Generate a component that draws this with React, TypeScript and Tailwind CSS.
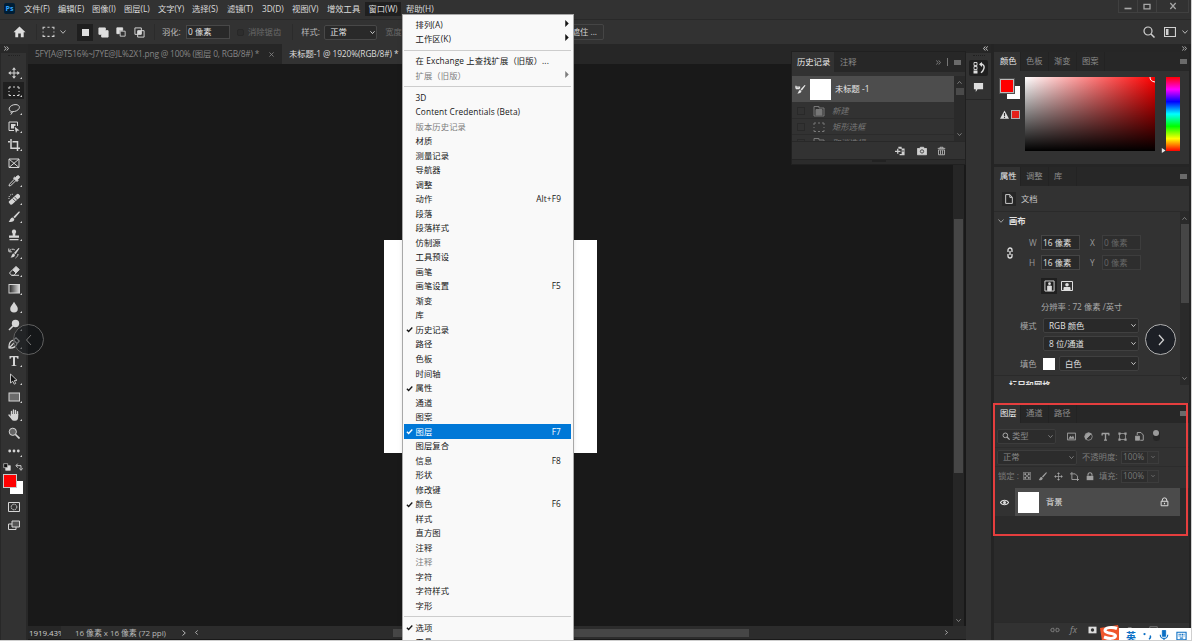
import React from 'react';
import clsx from 'clsx';

type MenuEntry = { label: string; key?: string; checked?: boolean; disabled?: boolean; sub?: boolean; active?: boolean } | 'sep';

const topMenu = [
  { label: '文件(F)', width: 'w-[34px]' },
  { label: '编辑(E)', width: 'w-[34px]' },
  { label: '图像(I)', width: 'w-[32px]' },
  { label: '图层(L)', width: 'w-[34px]' },
  { label: '文字(Y)', width: 'w-[34px]' },
  { label: '选择(S)', width: 'w-[35px]' },
  { label: '滤镜(T)', width: 'w-[35px]' },
  { label: '3D(D)', width: 'w-[30px]' },
  { label: '视图(V)', width: 'w-[35px]' },
  { label: '增效工具', width: 'w-[38px]' },
];

const windowMenu: MenuEntry[] = [
  { label: '排列(A)', sub: true },
  { label: '工作区(K)', sub: true },
  'sep',
  { label: '在 Exchange 上查找扩展（旧版）...' },
  { label: '扩展（旧版）', sub: true, disabled: true },
  'sep',
  { label: '3D' },
  { label: 'Content Credentials (Beta)' },
  { label: '版本历史记录', disabled: true },
  { label: '材质' },
  { label: '测量记录' },
  { label: '导航器' },
  { label: '调整' },
  { label: '动作', key: 'Alt+F9' },
  { label: '段落' },
  { label: '段落样式' },
  { label: '仿制源' },
  { label: '工具预设' },
  { label: '画笔' },
  { label: '画笔设置', key: 'F5' },
  { label: '渐变' },
  { label: '库' },
  { label: '历史记录', checked: true },
  { label: '路径' },
  { label: '色板' },
  { label: '时间轴' },
  { label: '属性', checked: true },
  { label: '通道' },
  { label: '图案' },
  { label: '图层', key: 'F7', checked: true, active: true },
  { label: '图层复合' },
  { label: '信息', key: 'F8' },
  { label: '形状' },
  { label: '修改键' },
  { label: '颜色', key: 'F6', checked: true },
  { label: '样式' },
  { label: '直方图' },
  { label: '注释' },
  { label: '注释', disabled: true },
  { label: '字符' },
  { label: '字符样式' },
  { label: '字形' },
  'sep',
  { label: '选项', checked: true },
  { label: '工具' },
];

function Svg({ children, className = 'w-3 h-3', box = '0 0 12 12' }: { children: React.ReactNode; className?: string; box?: string }) {
  return (
    <svg viewBox={box} className={clsx('shrink-0', className)} fill="none" stroke="currentColor" strokeWidth="1">
      {children}
    </svg>
  );
}

function Chevron({ className = 'w-[5px] h-[5px]' }: { className?: string }) {
  return (
    <Svg box="0 0 6 6" className={className}>
      <path d="M.5 1.500 3 4.300 5.500 1.500" />
    </Svg>
  );
}

function DoubleChevron({ left }: { left?: boolean }) {
  return (
    <Svg box="0 0 6 6" className={clsx('w-[5px] h-[5px]', left && 'rotate-180')}>
      <path d="M.5 .5 2.500 3 .5 5.500M3.300 .5 5.300 3 3.300 5.500" />
    </Svg>
  );
}

function PanelMenu() {
  return <span className="w-[7px] h-[5px] bg-[#6a6a6a]" />;
}

const marquee = <path d="M1 4V2h2M5 2h2M9 2h2v2M11 6v1M11 9v1.500H9M7 10.500H5M3 10.500H1V9M1 7V6" />;

const tools: { name: string; icon: React.ReactNode; plain?: boolean }[] = [
  {
    name: 'move',
    icon: (
      <>
        <path d="M6 2v8M2 6h8" />
        <path d="M6 .2 8 2.700H4ZM6 11.800 8 9.300H4ZM.2 6 2.700 4v4ZM11.800 6 9.300 4v4Z" fill="currentColor" stroke="none" />
      </>
    ),
  },
  { name: 'marquee', icon: marquee },
  {
    name: 'lasso',
    icon: <path d="M3.500 8.500C1.500 8 .8 6.500 1.300 5 2 3 5 1.300 8 1.600c3 .3 4 2 3 4C10 7.500 7 8.800 4.500 8.600c-1.500-.1-2 .8-1.300 1.300.8.400 1.800-.2 1.300-1.300M3.500 10c.3 1-.4 1.500-1 1.700" />,
  },
  {
    name: 'select',
    icon: (
      <>
        <path d="M6 9.500H1V1h8.500v4" />
        <path d="M3 3h4.500v2H6v2.500H3Z" fill="currentColor" stroke="none" />
        <path d="m6.500 5.500 5 4-2.300.3L8 12Z" fill="currentColor" stroke="none" />
      </>
    ),
  },
  { name: 'crop', icon: <path d="M0 2.800h2M3 0v9.300h9M4.500 2.800h5V12" strokeWidth="1.500" /> },
  { name: 'frame', plain: true, icon: <path d="M1 2h10v8.500H1ZM1 2l10 8.500M11 2 1 10.500" /> },
  {
    name: 'eyedropper',
    icon: (
      <>
        <path d="M6.500 4 1.500 9.200 1 11l1.800-.5L8 5.500" />
        <path d="m5.500 3 1-.8 1 .7C8 1.500 9.500.3 11 1c1 1.200 0 2.700-1.500 3.500l.5 1-1 1Z" fill="currentColor" />
      </>
    ),
  },
  {
    name: 'healing',
    icon: (
      <>
        <path d="M1 6C.5 3 2.500 1 5 1.300" strokeDasharray="1 1" />
        <rect x="0" y="4" width="13" height="4.500" rx="1.500" transform="rotate(-42 6.500 6.200)" fill="currentColor" stroke="none" />
        <path d="m4.500 5.500 3.500 3.200M6.500 3.800 9.500 7" stroke="#323232" strokeWidth=".8" />
      </>
    ),
  },
  {
    name: 'brush',
    icon: <path d="M11.500.5c.5.400.3.900 0 1.300L6.800 7.300 5.300 6 10.500.8c.3-.3.700-.5 1-.3ZM4.800 6.500l1.500 1.400C6.500 10 4 11.500.5 10.800 2.300 10 2 6.500 4.800 6.500Z" fill="currentColor" stroke="none" />,
  },
  {
    name: 'stamp',
    icon: <path d="M6 .5a2.200 2.200 0 0 1 1.500 3.800L7.200 6.500H11v2.300H1V6.500h3.800L4.500 4.300A2.200 2.200 0 0 1 6 .5ZM1.500 10h9v1.200h-9Z" fill="currentColor" stroke="none" />,
  },
  {
    name: 'historyBrush',
    icon: (
      <>
        <path d="M11.500 1.500 7.500 7.200 6 6 10.500 1ZM5.600 6.500 7 7.700c0 2-2 3-4.500 2.700 1.500-.7 1-3.500 3.100-3.900Z" fill="currentColor" stroke="none" />
        <path d="M1 4.500C2.500 2 5 1.500 7 3M.8 1.500v3.300h3M10 7c0 2-1 3-2.500 4" strokeDasharray="3 .6" />
      </>
    ),
  },
  {
    name: 'eraser',
    icon: (
      <>
        <path d="M4.700 4.700 8 1.500l3.300 3L8 8Z" fill="currentColor" />
        <path d="M4.700 4.700 1.500 8 3.500 10.300H6L8 8M3.500 10.300H11" />
      </>
    ),
  },
  {
    name: 'gradient',
    icon: (
      <>
        <defs>
          <linearGradient id="tool-gradient">
            <stop offset="0" stopColor="#222" />
            <stop offset="1" stopColor="#ddd" />
          </linearGradient>
        </defs>
        <rect x="1" y="1.500" width="10.500" height="8.500" fill="url(#tool-gradient)" />
      </>
    ),
  },
  { name: 'blur', icon: <path d="M6 .8C7.500 3.500 9.800 5.500 9.800 7.800a3.800 3.800 0 0 1-7.600 0C2.200 5.500 4.500 3.500 6 .8Z" fill="currentColor" stroke="none" /> },
  {
    name: 'dodge',
    icon: (
      <>
        <circle cx="7.500" cy="4.500" r="3.700" fill="currentColor" stroke="none" />
        <path d="M5 7 1 11" strokeWidth="1.600" />
      </>
    ),
  },
  { name: 'pen', icon: <path d="M1 11c-.3-4 1-7 4.500-8l3.500 3.500C8 10 5 11.300 1 11ZL5 7M6 2.500 8 .8 11.200 4 9.500 6M5 6.800l.8-.8" strokeWidth="1.200" /> },
  { name: 'type', icon: <path d="M1.500 1h9v2.800H9.300C9.200 2.600 8.800 2.300 7 2.300v7.200c0 .7.500.9 1.500 1V11h-5v-.5c1-.1 1.500-.3 1.500-1V2.300c-1.800 0-2.200.3-2.300 1.500H1.500Z" fill="currentColor" stroke="none" /> },
  { name: 'path', icon: <path d="M2.500 1v9l2.300-1.800 1.400 3 1.500-.7-1.400-3 2.700-.2Z" fill="#111" strokeWidth=".9" /> },
  { name: 'rect', icon: <rect x="1" y="2" width="10.500" height="8" fill="#6b6b6b" /> },
  {
    name: 'hand',
    icon: (
      <>
        <path d="M3.500 6V2.500M5.500 5V1M7.500 5V1.500M9.500 6V2.800M1 6l2.500 3" strokeWidth="1.400" strokeLinecap="round" />
        <path d="M2.800 5h7.400v3c0 2-1 3.800-3 3.800H6C4 11.800 2.800 9.500 2.800 8Z" fill="currentColor" stroke="none" />
      </>
    ),
  },
  {
    name: 'zoom',
    plain: true,
    icon: (
      <>
        <circle cx="4.800" cy="4.800" r="3.600" fill="#666" />
        <path d="m7.500 7.500 4 4" strokeWidth="1.700" />
      </>
    ),
  },
  {
    name: 'more',
    icon: (
      <g fill="currentColor" stroke="none">
        <circle cx="1.700" cy="6" r="1.400" />
        <circle cx="6" cy="6" r="1.400" />
        <circle cx="10.300" cy="6" r="1.400" />
      </g>
    ),
  },
];

function MenuBar() {
  return (
    <header className="flex h-[20px] shrink-0 items-start border-b border-[#292929] bg-[#323232] text-[#dcdcdc]">
      <div className="ml-1 mt-[3px] mr-[9px] flex h-[11px] w-[11px] items-center justify-center rounded-xs bg-[#001e36] text-[7px] font-bold text-[#31a8ff]">Ps</div>
      <nav className="flex h-[18px] items-center whitespace-nowrap">
        {topMenu.map((item) => (
          <span key={item.label} className={clsx('shrink-0', item.width)}>{item.label}</span>
        ))}
        <span className="flex h-[14px] w-[36px] items-center justify-center bg-[#1f1f1f]">窗口(W)</span>
        <span className="ml-[5px]">帮助(H)</span>
      </nav>
      <div className="ml-auto mr-[2px] flex h-[13px] border border-t-0 border-[#404040] text-[#a8a8a8]">
        <span className="flex w-[19px] items-center justify-center border-r border-[#404040]">
          <Svg className="w-2 h-2" box="0 0 8 8"><path d="M.5 6.500h7" strokeWidth="1.600" /></Svg>
        </span>
        <span className="flex w-[19px] items-center justify-center border-r border-[#404040]">
          <Svg className="w-2 h-2" box="0 0 8 8"><path d="M1 2.300h6v4.500H1Z" strokeWidth="1.300" /></Svg>
        </span>
        <span className="flex w-[31px] items-center justify-center">
          <Svg className="w-2 h-2" box="0 0 8 8"><path d="m1.300 1 5.400 6M6.700 1 1.300 7" strokeWidth="1.200" /></Svg>
        </span>
      </div>
    </header>
  );
}

function OptionsBar() {
  return (
    <div className="flex h-[24px] shrink-0 items-center whitespace-nowrap bg-[#323232] pl-[13px] text-[#b8b8b8]">
      <Svg className="w-[13px] h-[12px] text-[#dedede]">
        <path d="M6 .5 12 6.300h-1.800v5H7.300V7.500H4.700v3.800H1.800v-5H0Z" fill="currentColor" stroke="none" />
      </Svg>
      <span className="ml-[10px] h-4 w-px bg-[#2b2b2b]" />
      <Svg className="ml-[5px] mb-[1px] w-[13px] h-[13px] text-[#d0d0d0]">{marquee}</Svg>
      <Chevron className="ml-[5px] w-[6px] h-[6px]" />
      <div className="ml-[11px] flex items-center text-[#dedede]">
        <span className="flex h-[17px] w-[16px] items-center justify-center bg-[#1f1f1f]">
          <span className="h-[7px] w-[7px] bg-[#dedede]" />
        </span>
        <span className="flex w-[20px] justify-center">
          <Svg className="w-[11px] h-[11px]"><path d="M1 1h7v3h3v7H4V8H1Z" fill="currentColor" /></Svg>
        </span>
        <span className="flex w-[16px] justify-center">
          <Svg className="w-[10px] h-[10px]">
            <path d="M1 1h7v3H4v4H1Z" fill="currentColor" />
            <path d="M5 5h6v6H5Z" />
          </Svg>
        </span>
        <span className="flex w-[20px] justify-center">
          <Svg className="w-[11px] h-[11px]">
            <path d="M1 1h7v7H1ZM4 4h7v7H4Z" />
            <path d="M4.500 4.500h3v3h-3Z" fill="currentColor" />
          </Svg>
        </span>
      </div>
      <span className="ml-[5px] h-4 w-px bg-[#2b2b2b]" />
      <span className="ml-[7px] w-[24px]">羽化:</span>
      <span className="flex h-[14px] w-[44px] items-center border border-[#484848] bg-[#292929] pl-px text-[#e0e0e0]">0 像素</span>
      <span className="ml-[7px] h-[7px] w-[7px] rounded-xs border border-[#282828] bg-[#2d2d2d]" />
      <span className="ml-[4px] text-[#696969]">消除锯齿</span>
      <span className="ml-[11px] h-4 w-px bg-[#2b2b2b]" />
      <span className="ml-[8px] w-[23px]">样式:</span>
      <span className="flex h-[15px] w-[53px] items-center justify-between rounded-xs border border-[#484848] bg-[#292929] pl-[5px] pr-[1px] text-[#e8e8e8]">
        正常
        <Chevron />
      </span>
      <span className="ml-[8px] text-[#696969]">宽度:</span>
      <span className="ml-auto mr-[539px] flex h-[16px] w-[66px] items-center justify-end rounded-xs border border-[#454545] pr-[6px] text-[#d0d0d0]">选择并遮住 ...</span>
      <Svg className="w-[12px] h-[12px] text-[#d0d0d0]">
        <circle cx="5" cy="5" r="4" strokeWidth="1.200" />
        <path d="m8 8 3.500 3.500" strokeWidth="1.500" />
      </Svg>
      <Svg className="ml-[9px] w-[12px] h-[12px] text-[#d0d0d0]">
        <path d="M.5 1.500h11v9H.5Z" strokeWidth="1.200" />
        <path d="M2 3h2.500v6H2Z" fill="currentColor" stroke="none" />
      </Svg>
      <Chevron className="ml-[6px] mr-[3px] w-[6px] h-[6px]" />
    </div>
  );
}

function Toolbar() {
  return (
    <aside className="flex w-[26px] shrink-0 flex-col border-l border-[#282828] bg-[#323232] text-[#d5d5d5]">
      <div className="flex h-[9px] items-center bg-[#282828] pl-[3px]"><DoubleChevron /></div>
      <div className="flex h-[11px] items-start justify-center pt-[2px]"><span className="w-3 border-t border-dotted border-[#222]" /></div>
      {tools.map((tool) => (
        <div
          key={tool.name}
          className={clsx('mx-[2px] mb-px flex h-[17px] items-center justify-center', tool.name === 'marquee' && 'bg-[#1f1f1f]')}
        >
          <Svg className="w-[12px] h-[12px] ml-[2px]">{tool.icon}</Svg>
          <Svg box="0 0 3 3" className={clsx('w-[2px] h-[2px] self-end mb-[2px]', tool.plain && 'opacity-0')}>
            <path d="M3 0v3H0Z" fill="currentColor" stroke="none" />
          </Svg>
        </div>
      ))}
      <div className="mt-[2px] flex h-[10px] items-center pl-[2px]">
        <Svg className="w-[8px] h-[8px]">
          <path d="M4 4h7v7H4Z" fill="#ddd" />
          <path d="M1 1h6v6H1Z" fill="#111" />
        </Svg>
        <Svg className="ml-[4px] w-[8px] h-[8px]">
          <path d="M2 4h7v5M4 1 1.500 4 4 7M6.500 8 9 11l2.500-3" strokeWidth="1.400" />
        </Svg>
      </div>
      <div className="ml-[2px] mt-[2px] grid h-[20px] w-[20px]">
        <span className="col-start-1 row-start-1 h-[13px] w-[13px] place-self-end bg-white" />
        <span className="col-start-1 row-start-1 h-[14px] w-[14px] border border-[#c8c8c8] bg-[#ff0000]" />
      </div>
      <div className="mt-[7px] flex flex-col items-center gap-[6px]">
        <Svg className="w-[12px] h-[12px]">
          <path d="M.5 1.500h11v9H.5Z" />
          <circle cx="6" cy="6" r="2.800" strokeDasharray="1.500 .5" />
        </Svg>
        <Svg className="w-[12px] h-[12px]">
          <path d="M4 2h7.500v6H4Z" fill="#555" />
          <path d="M4 5H.5v5.500H8V8" />
        </Svg>
      </div>
    </aside>
  );
}

function Workspace() {
  return (
    <main className="flex w-[939px] shrink-0 flex-col border-l border-[#282828] bg-[#191919]">
      <div className="flex h-[20px] shrink-0 items-center whitespace-nowrap bg-[#262626] text-[8.400px]">
        <div className="flex h-full w-[254px] items-center pl-[7px] text-[#858585]">
          <span className="w-[234px] tracking-[-0.190px]">5FY[A@T516%~J7YE@JL%2X1.png @ 100% (图层 0, RGB/8#) *</span>
          <Svg className="w-[5px] h-[5px]" box="0 0 6 6"><path d="m.5.5 5 5M5.500.5l-5 5" /></Svg>
        </div>
        <div className="flex h-full w-[125px] items-center bg-[#323232] pl-[7px] tracking-[-0.120px] text-[#dcdcdc]">未标题-1 @ 1920%(RGB/8#) *</div>
      </div>
      <div className="flex h-[562px]">
        <div className="flex flex-1 items-start">
          <div className="ml-[356px] mt-[176px] h-[213px] w-[213px] bg-white" />
        </div>
        <div className="mr-[2px] flex w-[11px] flex-col items-center justify-between bg-[#262626] pb-[3px] text-[#909090]">
          <span className="mt-[155px] h-[254px] w-[9px] bg-[#464646]" />
          <Chevron />
        </div>
      </div>
      <div className="flex h-[13px] items-center bg-[#262626] text-[8px] text-[#d0d0d0]">
        <span className="w-[33px] overflow-hidden pl-[1px] tracking-[-0.080px]">1919.43%</span>
        <span className="flex h-full flex-1 items-center whitespace-nowrap bg-[#2c2c2c] pl-[14px] text-[#b8b8b8]">
          <span className="w-[106px] tracking-[-0.080px]">16 像素 x 16 像素 (72 ppi)</span>
          <Chevron className="w-[6px] h-[6px] -rotate-90" />
          <Chevron className="ml-[7px] w-[5px] h-[5px] rotate-90" />
          <span className="ml-[194px] h-[8px] w-[356px] bg-[#464646]" />
          <Chevron className="ml-auto mr-[17px] w-[5px] h-[5px] -rotate-90" />
        </span>
      </div>
    </main>
  );
}

function HistoryPanel() {
  return (
    <section className="absolute left-[791px] top-[51px] flex h-[114px] w-[175px] flex-col border border-[#202020] bg-[#323232]">
      <div className="flex h-[20px] items-center bg-[#272727] text-[#8a8a8a]">
        <span className="flex h-full w-[42px] items-center bg-[#323232] pl-[5px] text-[#ededed]">历史记录</span>
        <span className="ml-[6px] flex-1">注释</span>
        <DoubleChevron />
        <span className="mx-[6px] h-2 w-px bg-[#777]" />
        <PanelMenu />
        <span className="w-[4px]" />
      </div>
      <div className="mt-[4px] flex h-[65px] overflow-hidden">
        <div className="w-[162px] text-[#777]">
          <div className="mb-px flex h-[26px] items-center bg-[#4d4d4d] text-[8.300px] text-[#e8e8e8]">
            <Svg className="ml-[3px] w-[11px] h-[11px]">
              <path d="M11.500 1.500 7.500 7.200 6 6 10.500 1ZM5.600 6.500 7 7.700c0 2-2 3-4.500 2.700 1.500-.7 1-3.500 3.100-3.900Z" fill="currentColor" stroke="none" />
              <path d="M1 5h4M1 2v3M1 3.500h4V5" strokeWidth="1.300" />
            </Svg>
            <span className="ml-[4px] mr-[4px] h-[21px] w-[21px] bg-white" />
            未标题 -1
          </div>
          {['新建', '矩形选框', '取消选择'].map((step, i) => (
            <div key={step} className="flex h-[16px] items-center border-b border-[#2b2b2b] italic">
              <span className="ml-[5px] h-[8px] w-[8px] border border-[#292929]" />
              <Svg className="ml-[8px] mr-[7px] w-[12px] h-[12px]">
                {i === 1 ? marquee : (
                  <>
                    <path d="M1 1.500h5V3h5v8H1Z" />
                    <path d="M3 4.500h6V10H3Z" fill="currentColor" />
                  </>
                )}
              </Svg>
              {step}
            </div>
          ))}
        </div>
        <div className="flex flex-1 flex-col items-center bg-[#2a2a2a] py-[4px] text-[#888]">
          <Chevron className="w-[5px] h-[5px] rotate-180" />
          <span className="mt-[3px] h-[7px] w-[8px] bg-[#4a4a4a]" />
          <Chevron className="mt-auto w-[5px] h-[5px]" />
        </div>
      </div>
      <div className="flex h-[18px] items-center border-t border-[#282828] text-[#cfcfcf]">
        <Svg className="ml-[103px] w-[10px] h-[10px]">
          <path d="M4 3V1h4v2h3.500v8H5.500V9.500H8v-6Z" fill="currentColor" stroke="none" />
          <path d="M0 6.300h6.500M3.300 3.300v6" strokeWidth="1.500" />
          <path d="M8 6h3" stroke="#323232" />
        </Svg>
        <Svg className="ml-[12px] w-[10px] h-[10px]">
          <path d="M.5 3h2.800L4 1.500h4L8.700 3h2.800v7.500H.5Z" fill="currentColor" />
          <circle cx="6" cy="6.500" r="2" fill="#ccc" stroke="#323232" />
        </Svg>
        <Svg className="ml-[10px] w-[9px] h-[10px]">
          <path d="M1 2.500h10M4 2.500V1h4v1.500M2 4.500h8V11H2ZM4.700 5v5.500M7.300 5v5.500" />
        </Svg>
      </div>
      <div className="flex flex-1 justify-center border-t border-[#242424] bg-[#2b2b2b]"><span className="h-[2px] w-[14px] bg-[#222]" /></div>
    </section>
  );
}

function IconDock() {
  return (
    <aside className="flex w-[27px] shrink-0 flex-col items-center border-r-2 border-[#242424] bg-[#323232] text-[#dedede]">
      <div className="flex h-[9px] w-full items-center justify-end bg-[#262626] pr-[3px]"><DoubleChevron left /></div>
      <span className="mt-[2px] w-3 border-t border-dotted border-[#202020]" />
      <span className="mt-[4px] flex h-[16px] w-[19px] items-center justify-center rounded-xs bg-[#1f1f1f]">
        <Svg className="w-[12px] h-[12px]">
          <path d="M1 .5h3v3H1ZM1 4.500h3v3H1Z" strokeWidth=".9" />
          <path d="M.5 8.500h4v3h-4Z" fill="currentColor" stroke="none" />
          <path d="M7.500 1.800C11 2 11.800 5 10.500 7.500 10 9 9 10 8 10.800" strokeWidth="1.400" />
          <path d="M9 0v5L6 2.300Z" fill="currentColor" stroke="none" />
        </Svg>
      </span>
      <Svg className="mt-[5px] w-[11px] h-[12px]">
        <path d="M1 1.500h10v7H5l-2 3v-3H1Z" fill="currentColor" stroke="none" />
      </Svg>
      <span className="mt-[6px] h-px w-full bg-[#262626]" />
    </aside>
  );
}

function PanelTabs({ names }: { names: string[] }) {
  return (
    <div className="flex h-[19px] shrink-0 items-center bg-[#272727] text-[#8c8c8c]">
      {names.map((name, i) => (
        <span
          key={name}
          className={clsx('flex h-full items-center border-r border-[#232323] pb-[1px]', i === 0 ? 'w-[27px] bg-[#323232] pl-[6px] text-[#ededed]' : 'w-[28px] pl-[5px]', name === '库' && 'w-[25px]')}
        >
          {name}
        </span>
      ))}
      <span className="ml-auto mr-[2px] flex"><PanelMenu /></span>
    </div>
  );
}

function ColorPanel() {
  return (
    <section className="flex h-[112px] flex-col">
      <PanelTabs names={['颜色', '色板', '渐变', '图案']} />
      <div className="flex flex-1 items-start pl-[6px] pt-[6px]">
        <div className="w-[25px] pt-[2px]">
          <div className="grid h-[20px] w-[20px]">
            <span className="col-start-1 row-start-1 h-[13px] w-[13px] place-self-end bg-white" />
            <span className="col-start-1 row-start-1 h-[14px] w-[14px] border border-[#bbb] bg-[#ff0000] outline outline-[#505050]" />
          </div>
          <div className="mt-[11px] flex items-center gap-[2px]">
            <Svg className="w-[9px] h-[9px]">
              <path d="M6 .5 12 11.500H0Z" fill="#dedede" stroke="none" />
              <path d="M6 4v4M6 9v1.500" stroke="#323232" strokeWidth="1.500" />
            </Svg>
            <span className="h-[9px] w-[9px] border border-[#b0b0b0] bg-[#e52119]" />
          </div>
        </div>
        <div className="flex h-[74px] w-[130px] items-start justify-end overflow-hidden bg-[linear-gradient(to_bottom,transparent,black),linear-gradient(to_right,white,#ff0000)]">
          <Svg box="0 0 6 6" className="w-[6px] h-[6px] text-white"><path d="M1 0c0 3 1.500 4.500 5 5" /></Svg>
        </div>
        <Svg box="0 0 6 6" className="ml-[6px] mt-[71px] w-[5px] h-[5px]"><path d="M1 0 5.500 3 1 6Z" fill="#e8e8e8" stroke="none" /></Svg>
        <div className="h-[74px] w-[14px] bg-[linear-gradient(to_bottom,#f00,#f0f,#00f,#0ff,#0f0,#ff0,#f00)]" />
      </div>
    </section>
  );
}

function Field({ label, value, off }: { label: string; value: string; off?: boolean }) {
  return (
    <>
      <span className="w-[12px] text-[#9a9a9a]">{label}</span>
      <span className={clsx('flex h-[15px] w-[39px] items-center border pl-[1px]', off ? 'border-[#3d3d3d] bg-[#2e2e2e] text-[#666]' : 'border-[#454545] bg-[#292929] text-[#e0e0e0]')}>{value}</span>
    </>
  );
}

function Select({ value, className }: { value: string; className: string }) {
  return (
    <span className={clsx('flex h-[15px] items-center justify-between rounded-xs border border-[#404040] bg-[#292929] pl-[5px] pr-[2px]', className)}>
      {value}
      <Chevron />
    </span>
  );
}

function PropertiesPanel() {
  return (
    <section className="flex h-[228px] flex-col">
      <PanelTabs names={['属性', '调整', '库']} />
      <div className="flex h-[26px] items-center border-b border-[#2a2a2a] pl-[8px] pt-[1px] text-[#c8c8c8]">
        <span className="flex h-[14px] w-[14px] items-center justify-center bg-[#262626]">
          <Svg className="w-[10px] h-[10px]"><path d="M2 .7h5L10 4v7.300H2ZM7 .7V4h3" strokeWidth="1.200" /></Svg>
        </span>
        <span className="ml-[5px]">文档</span>
      </div>
      <div className="flex h-[173px] overflow-hidden whitespace-nowrap">
        <div className="w-[186px] text-[#e0e0e0]">
          <div className="flex h-[18px] items-center pl-[4px] font-bold">
            <span className="mr-[5px] text-[#a0a0a0]"><Chevron className="w-[6px] h-[6px]" /></span>
            画布
          </div>
          <div className="mt-[1px] flex">
            <div className="flex h-[44px] w-[35px] items-center pl-[12px]">
              <Svg className="w-[8px] h-[12px]" box="0 0 8 12">
                <path d="M2 5V3a2 2 0 0 1 4 0v2M2 7v2a2 2 0 0 0 4 0V7M4 4v4" strokeWidth="1.300" />
              </Svg>
            </div>
            <div className="pt-[4px]">
              <div className="mb-[5px] flex items-center"><Field label="W" value="16 像素" /><span className="w-[10px]" /><Field label="X" value="0 像素" off /></div>
              <div className="flex items-center"><Field label="H" value="16 像素" /><span className="w-[10px]" /><Field label="Y" value="0 像素" off /></div>
            </div>
          </div>
          <div className="mt-[3px] flex items-center pl-[47px] text-[#dedede]">
            <span className="flex h-[16px] w-[16px] items-center justify-center bg-[#1f1f1f]">
              <Svg className="w-[11px] h-[12px]"><path d="M1 .5h10v11H1Z" /><path d="M4 6h4v5H4Z" fill="currentColor" /><circle cx="6" cy="3.500" r="1.500" fill="currentColor" stroke="none" /></Svg>
            </span>
            <Svg className="ml-[4px] w-[12px] h-[10px]" box="0 0 12 10"><path d="M.5 .5h11v9H.5Z" /><path d="M3 9V6.500h6V9Z" fill="currentColor" /><circle cx="6" cy="3.800" r="1.800" fill="currentColor" stroke="none" /></Svg>
          </div>
          <div className="mt-[7px] pl-[47px] text-[#a8a8a8]">分辨率 : 72 像素 /英寸</div>
          <div className="mt-[5px] flex items-center">
            <span className="w-[49px] pl-[26px] text-[#a8a8a8]">模式</span>
            <Select value="RGB 颜色" className="w-[96px]" />
          </div>
          <div className="mt-[3px] flex pl-[49px]"><Select value="8 位/通道" className="w-[96px]" /></div>
          <div className="mt-[5px] flex items-center">
            <span className="w-[49px] pl-[26px] text-[#a8a8a8]">填色</span>
            <span className="mr-[4px] h-[12px] w-[12px] bg-white" />
            <Select value="白色" className="w-[80px]" />
          </div>
          <div className="mt-[4px] border-t border-[#2a2a2a] pl-[15px] pt-[3px] font-bold">标尺和网格</div>
        </div>
        <div className="flex flex-1 flex-col items-center bg-[#2a2a2a] py-[4px] text-[#888]">
          <Chevron className="w-[5px] h-[5px] rotate-180" />
          <span className="mt-[3px] h-[79px] w-[8px] bg-[#464646]" />
          <Chevron className="mt-auto w-[5px] h-[5px]" />
        </div>
      </div>
    </section>
  );
}

function Percent() {
  return (
    <>
      <span className="flex h-[13px] w-[27px] items-center border border-[#3c3c3c] bg-[#2d2d2d] pl-[1px] text-[#777]">100%</span>
      <span className="flex h-[13px] w-[11px] items-center justify-center border border-l-0 border-[#3c3c3c]"><Chevron className="w-[4px] h-[4px]" /></span>
    </>
  );
}

function LayersPanel() {
  return (
    <section className="flex flex-1 flex-col whitespace-nowrap text-[#7c7c7c]">
      <PanelTabs names={['图层', '通道', '路径']} />
      <div className="flex h-[25px] items-center border-b border-[#2c2c2c] pl-[3px] pt-[2px]">
        <span className="flex h-[15px] w-[59px] items-center rounded-xs border border-[#3c3c3c] bg-[#2c2c2c] pl-[4px] pr-[2px] text-[#8a8a8a]">
          <Svg className="mr-[2px] w-[8px] h-[8px] text-[#aaa]"><circle cx="5" cy="5" r="3.500" strokeWidth="1.500" /><path d="m7.500 7.500 4 4" strokeWidth="1.800" /></Svg>
          <span className="flex-1">类型</span>
          <Chevron />
        </span>
        <div className="ml-[11px] flex items-center gap-[8px] text-[#a0a0a0]">
          <Svg className="w-[9px] h-[9px]"><path d="M.5 1.500h11v9H.5Z" strokeWidth="1.300" /><path d="m2 9 2.500-4 2 2L8 4.500 10 9Z" fill="currentColor" stroke="none" /></Svg>
          <Svg className="w-[9px] h-[9px]"><circle cx="6" cy="6" r="5" /><path d="M9.500 2.500A5 5 0 0 0 2.500 9.500Z" fill="currentColor" /></Svg>
          <Svg className="w-[9px] h-[9px]"><path d="M1 2h10M1.500 2v2.500M10.500 2v2.500M6 2v9M4 10.800h4" strokeWidth="1.800" /></Svg>
          <Svg className="w-[9px] h-[9px]"><path d="M2 2h8v8H2Z" /><path d="M.5.5h3v3h-3ZM8.500.5h3v3h-3ZM.5 8.500h3v3h-3ZM8.500 8.500h3v3h-3Z" fill="currentColor" stroke="none" /></Svg>
          <Svg className="w-[9px] h-[9px]"><path d="M3 4V.7h5L11 4v7H7" strokeWidth="1.300" /><path d="M.5 5.500H6V11H.5Z" fill="currentColor" /></Svg>
          <span className="mb-[1px] ml-[1px] h-[11px] w-[7px] rounded-full bg-[#262626]"><span className="block h-[6px] w-[6px] rounded-full bg-[#9a9a9a]" /></span>
        </div>
      </div>
      <div className="flex h-[19px] items-center border-b border-[#2c2c2c] pl-[3px]">
        <span className="flex h-[15px] w-[80px] items-center justify-between rounded-xs border border-[#3c3c3c] bg-[#2c2c2c] pl-[5px] pr-[2px] text-[#8a8a8a]">正常<Chevron /></span>
        <span className="ml-[5px] w-[39px]">不透明度:</span>
        <Percent />
      </div>
      <div className="flex h-[21px] items-center pb-[3px] pl-[4px]">
        <span className="w-[25px]">锁定 :</span>
        <div className="flex w-[76px] items-center gap-[7px] text-[#a0a0a0]">
          <Svg className="w-[8px] h-[8px]"><path d="M.5.5h11v11H.5Z" /><path d="M2 2h2.700v2.700H2ZM7.300 2H10v2.700H7.300ZM4.700 4.700h2.600v2.600H4.700ZM2 7.300h2.700V10H2ZM7.300 7.300H10V10H7.300Z" fill="currentColor" stroke="none" /></Svg>
          <Svg className="w-[9px] h-[9px]">{tools[8].icon}</Svg>
          <Svg className="w-[9px] h-[9px]">{tools[0].icon}</Svg>
          <Svg className="w-[9px] h-[9px]"><path d="M0 2.500h7l3 3V12M2.500 0v10H12" strokeWidth="1.200" /></Svg>
          <Svg className="w-[8px] h-[9px]"><path d="M3 5V3.500a3 3 0 0 1 6 0V5" strokeWidth="1.600" /><path d="M1 5h10v6.500H1Z" fill="currentColor" stroke="none" /></Svg>
        </div>
        <span className="w-[22px]">填充:</span>
        <Percent />
      </div>
      <div className="flex flex-1 flex-col bg-[#2b2b2b]">
        <div className="flex h-[28px] items-center text-[#e0e0e0]">
          <span className="flex h-full w-[21px] items-center justify-center bg-[#323232]">
            <Svg className="w-[9px] h-[9px]"><path d="M.5 6C3 2 9 2 11.500 6 9 10 3 10 .5 6Z" strokeWidth="1.500" /><circle cx="6" cy="6" r="2" fill="currentColor" stroke="none" /></Svg>
          </span>
          <div className="flex h-full w-[165px] items-center bg-[#4b4b4b] pl-[3px]">
            <span className="mr-[7px] h-[21px] w-[21px] bg-white" />
            <span className="flex-1">背景</span>
            <Svg className="mr-[11px] w-[9px] h-[10px]"><path d="M3 5V3.500a3 3 0 0 1 6 0V5M1.500 5h9v6h-9Z" strokeWidth="1.300" /><path d="M6 7v2" strokeWidth="1.500" /></Svg>
          </div>
        </div>
      </div>
      <div className="mb-[1px] flex h-[17px] shrink-0 items-center border-t border-[#2a2a2a] bg-[#323232] pl-[56px] pb-[2px] text-[#8c8c8c]">
        <Svg className="w-[10px] h-[6px]" box="0 0 12 6"><path d="M5 5H3a2 2 0 0 1 0-4h2M7 1h2a2 2 0 0 1 0 4H7M3.500 3h5" /></Svg>
        <span className="ml-[10px] w-[18px] text-[9px] italic">fx</span>
        <Svg className="w-[9px] h-[8px] text-[#dedede]"><path d="M0 1h12v10H0Z" fill="currentColor" stroke="none" /><circle cx="6" cy="6" r="2.500" fill="#323232" stroke="none" /></Svg>
        <Svg className="ml-[30px] w-[10px] h-[9px]"><path d="M1 2h4l1 1.500h5V11H1Z" /></Svg>
        <Svg className="ml-[12px] w-[9px] h-[9px]"><path d="M1 1h10v10H1Z" /></Svg>
      </div>
    </section>
  );
}

function WindowMenu() {
  return (
    <div className="absolute left-[402px] top-[14px] h-[626px] w-[172px] overflow-hidden border border-b-0 border-[#a8a8a8] bg-[#f9f9f9] pl-px pr-[2px] pt-[2.400px] tracking-[0.120px] text-[#161616] shadow-md">
      {windowMenu.map((item, i) =>
        item === 'sep' ? (
          <div key={i} className="flex h-[7.500px] items-center"><span className="h-px w-full bg-[#cdcdcd]" /></div>
        ) : (
          <div
            key={i}
            className={clsx('flex h-[14.530px] items-center whitespace-nowrap', item.active && 'bg-[#0078d7] text-white', item.disabled && 'text-[#7d7d7d]')}
          >
            <span className="flex w-[11.500px] items-center pl-[2px]">
              {item.checked && <Svg box="0 0 8 8" className="w-[7px] h-[7px]"><path d="M1 4.300 3 6.300 7.200 1.700" strokeWidth="1.500" /></Svg>}
            </span>
            <span className="flex-1">{item.label}</span>
            {item.key && <span className="mr-[10px]">{item.key}</span>}
            {item.sub && <Svg box="0 0 4 8" className="mb-[3px] mr-[2px] w-[4px] h-[7px]"><path d="M0 0 4 4 0 8Z" fill="currentColor" stroke="none" /></Svg>}
          </div>
        )
      )}
    </div>
  );
}

function ImeBar() {
  return (
    <div className="absolute left-[1100px] top-[625px] flex h-[16px] w-[92px] items-end overflow-hidden text-[#0b6fc4]">
      <svg viewBox="0 0 22 16" className="h-[16px] w-[22px] shrink-0">
        <path d="m0 3 18-3 4 16H2Z" fill="#f0562b" />
        <path d="M17 3.500C12 1.500 5 2.500 5 5.500c0 3.500 10.500 2 10.500 5.500C15 14 9 14 4 12" fill="none" stroke="#fff" strokeWidth="3" />
      </svg>
      <div className="-ml-[3px] flex h-[13px] flex-1 items-center bg-white pl-[7px] pt-[2px] text-[10px] font-bold">
        <span className="w-[17px]">英</span>
        <Svg className="w-[9px] h-[9px]"><circle cx="2" cy="4" r="1.500" fill="currentColor" stroke="none" /><path d="M9.500 6c1 2 0 4-1.500 5" strokeWidth="2" /></Svg>
        <Svg className="ml-[7px] w-[10px] h-[11px]"><path d="M4 0h4v7H4Z" fill="currentColor" /><path d="M1.500 5c0 6 9 6 9 0M6 9v3" strokeWidth="1.400" /></Svg>
        <Svg className="ml-[7px] w-[11px] h-[10px]"><path d="M.5 1.500h11v9H.5Z" strokeWidth="1.300" /><path d="M2.500 4h7M2.500 6h7" strokeWidth="1.300" strokeDasharray="1.300 .7" /><path d="M4 8.500h4" strokeWidth="1.400" /></Svg>
      </div>
    </div>
  );
}

export default function App() {
  return (
    <div className="relative flex h-[641px] w-[1192px] flex-col overflow-hidden border-r border-b border-[#cfcfcf] bg-[#282828] font-['Open_Sans','Noto_Sans_CJK_SC',sans-serif] text-[8.300px] leading-[12px]">
      <MenuBar />
      <OptionsBar />
      <div className="flex h-[596px] shrink-0">
        <Toolbar />
        <span className="w-px bg-[#282828]" />
        <Workspace />
        <IconDock />
        <div className="flex flex-1 flex-col border-l border-r-2 border-[#242424] bg-[#323232]">
          <div className="flex h-[8px] shrink-0 items-center justify-end bg-[#262626] pr-[2px] text-[#c0c0c0]"><DoubleChevron /></div>
          <ColorPanel />
          <div className="h-[3px] shrink-0 bg-[#252525]" />
          <PropertiesPanel />
          <div className="h-[9px] shrink-0 border-b border-[#242424]" />
          <LayersPanel />
        </div>
      </div>

      <HistoryPanel />
      <div className="absolute left-[993px] top-[403px] h-[133px] w-[195px] border-2 border-[#e53e3e]" />
      <button className="absolute left-[13px] top-[324px] flex h-[31px] w-[31px] items-center justify-center rounded-full border border-[#606060] bg-[#11151a]/50 text-[#777]">
        <Svg className="w-[12px] h-[12px]"><path d="M8 1 3.500 6 8 11" /></Svg>
      </button>
      <button className="absolute left-[1145px] top-[324px] flex h-[31px] w-[31px] items-center justify-center rounded-full border border-[#b0b0b0] bg-[#1d2026] text-[#d0d0d0]">
        <Svg className="w-[12px] h-[12px]"><path d="M4 1 8.500 6 4 11" strokeWidth="1.300" /></Svg>
      </button>
      <WindowMenu />
      <ImeBar />
    </div>
  );
}
